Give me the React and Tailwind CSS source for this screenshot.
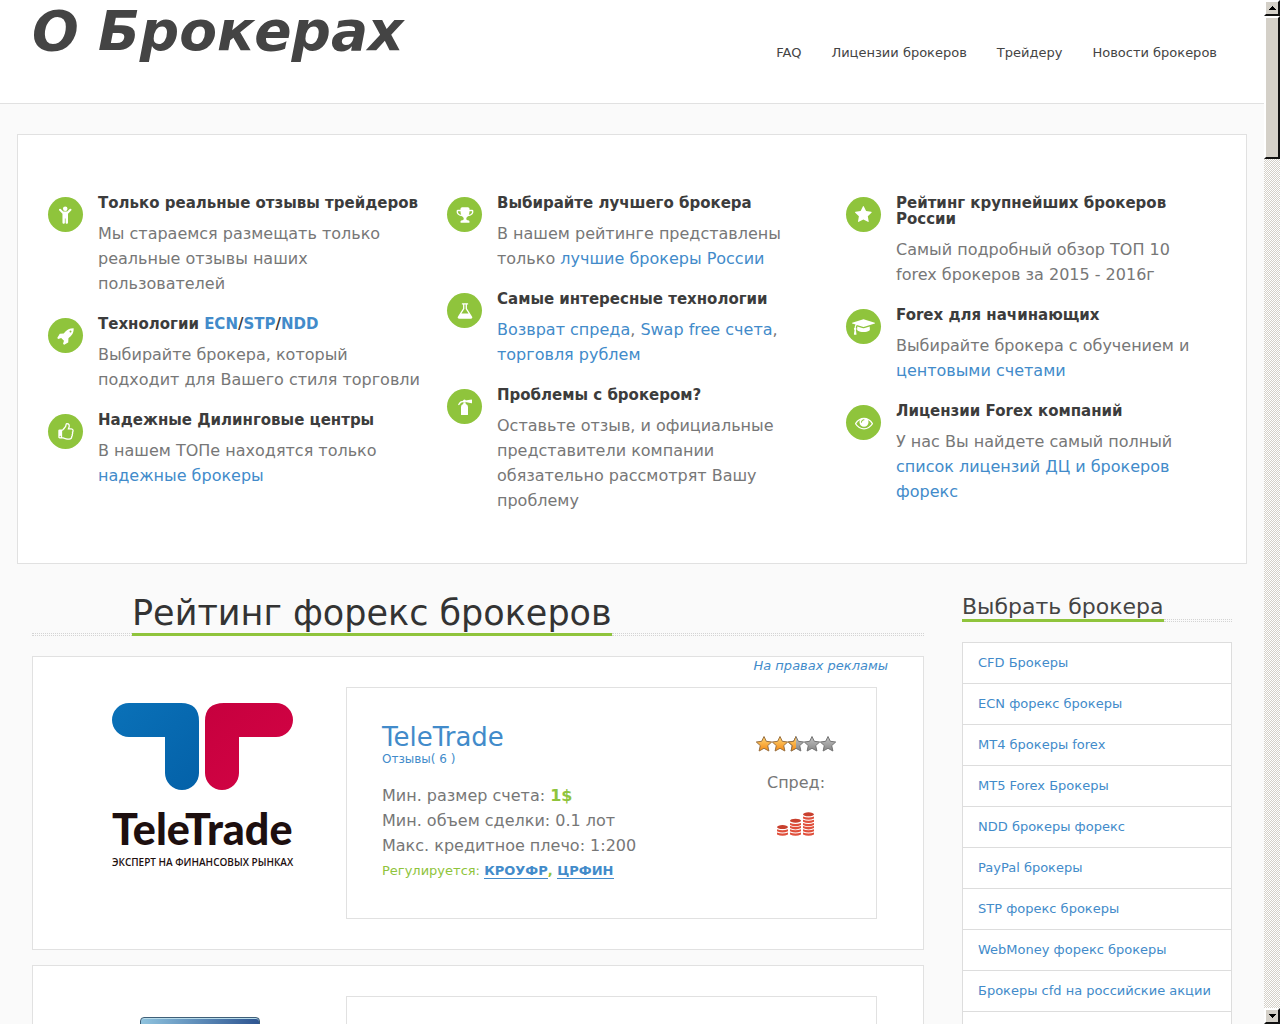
import React from 'react';

const checker = 'bg-[repeating-conic-gradient(#d4d0c8_0_25%,#ffffff_0_50%)] bg-[length:2px_2px]';
const dots = 'h-[3px] border-y border-dotted border-[#d4d4d4]';

const paths = {
  rocket: 'M1440 448q0-40-28-68t-68-28-68 28-28 68 28 68 68 28 68-28 28-68zm224-288q0 249-75.5 430.5t-253.5 360.5q-81 80-195 176l-20 379q-2 16-16 26l-384 224q-7 4-16 4-12 0-23-9l-64-64q-13-14-8-32l85-276-281-281-276 85q-3 1-9 1-14 0-23-9l-64-64q-17-19-5-39l224-384q10-14 26-16l379-20q96-114 176-195 188-187 358-258t431-71q14 0 24 9.5t10 22.5z',
  thumb: 'M384 1344q0-26-19-45t-45-19-45 19-19 45 19 45 45 19 45-19 19-45zm1152-576q0-51-39-89.5t-89-38.5h-352q0-58 48-159.5t48-160.5q0-98-32-145t-128-47q-26 26-38 85t-30.5 125.5-59.5 109.5q-22 23-77 91-4 5-23 30t-31.5 41-34.5 42.5-40 44-38.5 35.5-40 27-35.5 9h-32v640h32q13 0 31.5 3t33 6.5 38 11 35 11.5 35.5 12.5 29 10.5q211 73 342 73h121q192 0 192-167 0-26-5-56 30-16 47.5-52.5t17.5-73.5-18-69q53-50 53-119 0-25-10-55.5t-25-47.5q32-1 53.5-47t21.5-81zm128-1q0 89-49 163 9 33 9 69 0 77-38 144 3 21 3 43 0 101-60 178 1 139-85 219.5t-227 80.5h-129q-96 0-189.5-22.5t-216.5-65.5q-116-40-138-40h-288q-53 0-90.5-37.5t-37.5-90.5v-640q0-53 37.5-90.5t90.5-37.5h274q36-24 137-155 58-75 107-128 24-25 35.5-85.5t30.5-126.5 62-108q39-37 90-37 84 0 151 32.5t102 101.5 35 186q0 93-48 192h176q104 0 180 76t76 179z',
  trophy: 'M522 883q-74-162-74-371h-256v96q0 78 94.5 162t235.5 113zm1078-275v-96h-256q0 209-74 371 141-29 235.5-113t94.5-162zm128-128v128q0 71-41.5 143t-112 130-173 97.5-215.5 44.5q-42 54-95 95-38 34-52.5 72.5t-14.5 89.5q0 54 30.5 91t97.5 37q75 0 133.5 45.5t58.5 114.5v64q0 14-9 23t-23 9h-832q-14 0-23-9t-9-23v-64q0-69 58.5-114.5t133.5-45.5q67 0 97.5-37t30.5-91q0-51-14.5-89.5t-52.5-72.5q-53-41-95-95-113-5-215.5-44.5t-173-97.5-112-130-41.5-143v-128q0-40 28-68t68-28h288v-96q0-66 47-113t113-47h576q66 0 113 47t47 113v96h288q40 0 68 28t28 68z',
  flask: 'M1591 1448q56 89 21.5 152.5t-140.5 63.5h-1152q-106 0-140.5-63.5t21.5-152.5l503-793v-399h-64q-26 0-45-19t-19-45 19-45 45-19h512q26 0 45 19t19 45-19 45-45 19h-64v399zm-779-725l-272 429h712l-272-429-20-31v-436h-128v436z',
  star: 'M1664 615q0 22-26 48l-363 354 86 500q1 7 1 20 0 21-10.5 35.5t-30.5 14.5q-19 0-40-12l-449-236-449 236q-22 12-40 12-21 0-31.5-14.5t-10.5-35.5q0-6 2-20l86-500-364-354q-25-27-25-48 0-37 56-46l502-73 225-455q19-41 49-41t49 41l225 455 502 73q56 9 56 46z',
  eye: 'M1664 960q-152-236-381-353 61 104 61 225 0 185-131.5 316.5t-316.5 131.5-316.5-131.5-131.5-316.5q0-121 61-225-229 117-381 353 133 205 333.5 326.5t434.5 121.5 434.5-121.5 333.5-326.5zm-720-384q0-20-14-34t-34-14q-125 0-214.5 89.5t-89.5 214.5q0 20 14 34t34 14 34-14 14-34q0-86 61-147t147-61q20 0 34-14t14-34zm848 384q0 34-20 69-140 230-376.5 368.5t-499.5 138.5-499.5-139-376.5-368q-20-35-20-69t20-69q140-229 376.5-368t499.5-139 499.5 139 376.5 368q20 35 20 69z',
};

function Icon({ name }) {
  if (name === 'extinguisher') {
    return (
      <svg viewBox="0 0 18 18" className="h-[18px] w-[18px]" fill="currentColor">
        <path d="M5 9q0-2.300 2.300-3V4.400h2.400V6Q12 6.700 12 9v7.500q0 .500-.500.500h-6q-.500 0-.500-.500z" />
        <circle cx="8.500" cy="3" r="1.500" />
        <path d="M9.500 2.600l6-1.200q.500 0 .500.500v3q0 .500-.500.400l-6-1.200z" />
        <path d="M8.500 3.500Q4.500 3 2.800 6.500" fill="none" stroke="currentColor" strokeWidth="1.300" strokeLinecap="round" />
      </svg>
    );
  }
  if (name === 'child') {
    return (
      <svg viewBox="200 100 1152 1664" className="h-[18px]" fill="currentColor">
        <circle cx="776" cy="352" r="210" />
        <path d="M1324 516l-292 292v824q0 46-33 79t-79 33-79-33-33-79v-384h-64v384q0 46-33 79t-79 33-79-33-33-79v-824l-292-292q-28-28-28-68t28-68q29-28 68.500-28t67.500 28l228 228h368l228-228q28-28 68-28t68 28 28 68.500-28 67.500z" />
      </svg>
    );
  }
  if (name === 'cap') {
    return (
      <svg viewBox="0 0 2304 1792" className="h-[18px] w-[23px]" fill="currentColor">
        <path d="M1774 836l18 316q4 69-82 128t-235 93.500-323 34.500-323-34.500-235-93.500-82-128l18-316 574 181q22 7 48 7t48-7zm530-324q0 23-22 31l-1120 352q-4 1-10 1t-10-1l-652-206q-43 34-71 111.500t-34 178.500q63 36 63 109 0 69-58 107l58 433q2 14-8 25-9 11-24 11h-192q-15 0-24-11-10-11-8-25l58-433q-58-38-58-107 0-73 65-111 11-207 98-330l-333-104q-22-8-22-31t22-31l1120-352q4-1 10-1t10 1l1120 352q22 8 22 31z" />
      </svg>
    );
  }
  return (
    <svg viewBox="0 0 1792 1792" className="h-[18px] w-[18px]" fill="currentColor">
      <path d={paths[name]} />
    </svg>
  );
}

function A({ children }) {
  return <a href="#" className="text-[#428bca]">{children}</a>;
}

const features = [
  [
    { icon: 'child', title: 'Только реальные отзывы трейдеров', text: 'Мы стараемся размещать только реальные отзывы наших пользователей' },
    { icon: 'rocket', title: <>Технологии <A>ECN</A>/<A>STP</A>/<A>NDD</A></>, text: 'Выбирайте брокера, который подходит для Вашего стиля торговли' },
    { icon: 'thumb', title: 'Надежные Дилинговые центры', text: <>В нашем ТОПе находятся только <A>надежные брокеры</A></> },
  ],
  [
    { icon: 'trophy', title: 'Выбирайте лучшего брокера', text: <>В нашем рейтинге представлены только <A>лучшие брокеры России</A></> },
    { icon: 'flask', title: 'Самые интересные технологии', text: <><A>Возврат спреда</A>, <A>Swap free счета</A>, <A>торговля рублем</A></> },
    { icon: 'extinguisher', title: 'Проблемы с брокером?', text: 'Оставьте отзыв, и официальные представители компании обязательно рассмотрят Вашу проблему' },
  ],
  [
    { icon: 'star', title: 'Рейтинг крупнейших брокеров России', text: 'Самый подробный обзор ТОП 10 forex\u00a0брокеров за 2015 - 2016г' },
    { icon: 'cap', title: 'Forex для начинающих', text: <>Выбирайте брокера с обучением и <A>центовыми счетами</A></> },
    { icon: 'eye', title: 'Лицензии Forex компаний', text: <>У нас Вы найдете самый полный <A>список лицензий ДЦ и брокеров форекс</A></> },
  ],
];

const menu = ['FAQ', 'Лицензии брокеров', 'Трейдеру', 'Новости брокеров'];

const categories = [
  'CFD Брокеры',
  'ECN форекс брокеры',
  'MT4 брокеры forex',
  'MT5 Forex Брокеры',
  'NDD брокеры форекс',
  'PayPal брокеры',
  'STP форекс брокеры',
  'WebMoney форекс брокеры',
  'Брокеры cfd на российские акции',
];

function Header() {
  return (
    <header className="flex h-[104px] shrink-0 justify-between border-b border-[#e1e1e1] bg-white pl-8 pr-[47px]">
      <h1 className="text-[55px] font-bold italic leading-[62px] text-[#444444]">О Брокерах</h1>
      <nav className="flex gap-[30px] pt-[43px] text-[13px] leading-5 text-[#444444]">
        {menu.map((item) => (
          <a key={item} href="#">{item}</a>
        ))}
      </nav>
    </header>
  );
}

function Feature({ icon, title, text }) {
  return (
    <div className="mb-[19px] flex gap-[15px]">
      <div className="mt-[3px] flex h-[35px] w-[35px] shrink-0 items-center justify-center rounded-full bg-[#8fc43c] text-white">
        <Icon name={icon} />
      </div>
      <div>
        <h4 className="mb-[10px] pt-px text-[15px] font-bold leading-4 text-[#3c3c3c]">{title}</h4>
        <p className="leading-[25px]">{text}</p>
      </div>
    </div>
  );
}

function TeleTradeLogo() {
  return (
    <svg viewBox="0 0 184 174" className="h-[174px] w-[184px] overflow-visible" role="img" aria-label="TeleTrade">
      <defs>
        <linearGradient id="blue" x1="0" y1="0" x2="1" y2="1">
          <stop offset="0" stopColor="#0a71b8" />
          <stop offset="1" stopColor="#0461a8" />
        </linearGradient>
        <linearGradient id="red" x1="0" y1="0" x2="1" y2="1">
          <stop offset="0" stopColor="#c6003e" />
          <stop offset="1" stopColor="#d40445" />
        </linearGradient>
      </defs>
      <path fill="url(#blue)" d="M19 3H71Q89 3 89 21V73A17 17 0 0 1 55 73V37H19A17 17 0 0 1 19 3Z" />
      <path fill="url(#red)" d="M166 3H114Q95 3 95 21V73A17 17 0 0 0 129 73V37H166A17 17 0 0 0 166 3Z" />
      <text x="2" y="145" fontFamily="Lato, sans-serif" fontWeight="900" fontSize="43" fill="#1d0f0f">TeleTrade</text>
      <text x="2" y="166" fontFamily="'Open Sans', sans-serif" fontWeight="600" fontSize="10" fill="#1d0f0f">ЭКСПЕРТ НА ФИНАНСОВЫХ РЫНКАХ</text>
    </svg>
  );
}

function Stars() {
  const d = 'M8 .500l2.300 4.800 5.400.700-4 3.600 1.200 5.400-4.900-2.700-4.900 2.700 1.200-5.400L.3 6l5.400-.700z';
  return (
    <svg viewBox="0 0 80 16" className="h-4 w-20" role="img" aria-label="2.5">
      <defs>
        <linearGradient id="gold" x1="0" y1="0" x2="0" y2="1">
          <stop offset="0" stopColor="#ffd777" />
          <stop offset="1" stopColor="#f58a13" />
        </linearGradient>
        <linearGradient id="gray" x1="0" y1="0" x2="0" y2="1">
          <stop offset="0" stopColor="#c4c4c4" />
          <stop offset="1" stopColor="#858585" />
        </linearGradient>
        <clipPath id="half"><rect x="0" y="0" width="8" height="16" /></clipPath>
      </defs>
      {[0, 1, 2, 3, 4].map((i) => (
        <g key={i} transform={`translate(${i * 16} 0)`}>
          <path d={d} fill={i < 2 ? 'url(#gold)' : 'url(#gray)'} stroke={i < 2 ? '#9a7040' : '#747474'} />
          {i === 2 && <path d={d} fill="url(#gold)" stroke="#9a7040" clipPath="url(#half)" />}
        </g>
      ))}
    </svg>
  );
}

function Coins() {
  const stacks = [[1, 3], [14, 5], [27, 7]];
  return (
    <svg viewBox="0 0 40 26" className="h-[26px] w-10" fill="#e0503c">
      {stacks.map(([x, count]) => (
        <g key={x}>
          {Array.from({ length: count - 1 }, (_, i) => (
            <path key={i} d={`M${x} ${21.5 - i * 3.2}q5.500 2 11 0v2q-5.500 2.600-11 0z`} />
          ))}
          <ellipse cx={x + 5.5} cy={22.5 - (count - 1) * 3.2} rx="5.500" ry="2" fill="#c8402e" />
        </g>
      ))}
    </svg>
  );
}

function BrokerCard() {
  return (
    <article className="mb-[15px] border border-[#e1e1e1] bg-white pb-[30px]">
      <div className="h-[30px] pr-[35px] text-right text-[13px] italic leading-[18px]"><A>На правах рекламы</A></div>
      <div className="flex pr-[46px]">
        <div className="flex w-[313px] shrink-0 items-start justify-center pl-6 pt-[13px]">
          <TeleTradeLogo />
        </div>
        <div className="flex min-h-[232px] flex-1 justify-between border border-[#e1e1e1] pl-[35px] pr-10 pt-[35px]">
          <div>
            <h3 className="text-[26px] leading-[28px]"><A>TeleTrade</A></h3>
            <p className="mb-4 text-xs leading-4"><A>Отзывы( 6 )</A></p>
            <p className="leading-[25px]">Мин. размер счета: <b className="text-[#8fc43c]">1$</b></p>
            <p className="leading-[25px]">Мин. объем сделки: 0.1 лот</p>
            <p className="leading-[25px]">Макс. кредитное плечо: 1:200</p>
            <p className="text-[13px] leading-[26px] text-[#8fc43c]">
              Регулируется: <b><a href="#" className="border-b border-[#428bca] text-[#428bca]">КРОУФР</a>, <a href="#" className="border-b border-[#428bca] text-[#428bca]">ЦРФИН</a></b>
            </p>
          </div>
          <div className="flex flex-col items-center pt-[13px]">
            <Stars />
            <p className="mb-4 mt-[18px] leading-[25px]">Спред:</p>
            <Coins />
          </div>
        </div>
      </div>
    </article>
  );
}

function NextCard() {
  return (
    <article className="border border-[#e1e1e1] bg-white pt-[30px]">
      <div className="flex pr-[46px]">
        <div className="flex w-[313px] shrink-0 items-start justify-center pl-5 pt-[21px]">
          <div className="h-[120px] w-[120px] rounded-sm border border-[#3f5f78] bg-linear-to-r from-[#8fc3de] to-[#2f5591] shadow-[inset_0_1px_0_#b9dcea]" />
        </div>
        <div className="h-[232px] flex-1 border border-[#e1e1e1]" />
      </div>
    </article>
  );
}

function Sidebar() {
  return (
    <aside className="w-[270px] shrink-0">
      <div className="mb-5 flex items-end">
        <h2 className="border-b-[3px] border-[#8fc43c] pt-0.5 text-[22px] leading-6 text-[#444444]">Выбрать брокера</h2>
        <div className={`flex-1 ${dots}`} />
      </div>
      <ul className="border border-[#dddddd] bg-white pb-10 text-[13px]">
        {categories.map((item) => (
          <li key={item} className="border-b border-[#dddddd] px-[15px] py-[10px] leading-5"><A>{item}</A></li>
        ))}
      </ul>
    </aside>
  );
}

function Scrollbar() {
  return (
    <div className={`flex w-4 shrink-0 flex-col ${checker}`} aria-hidden="true">
      <div className="flex h-4 items-center justify-center border-2 border-b-[#111111] border-l-white border-r-[#111111] border-t-white bg-[#d4d0c8]">
        <svg viewBox="0 0 7 4" className="h-1 w-[7px]"><path d="M3 0h1v1h1v1h1v1h1v1H0V3h1V2h1V1h1z" /></svg>
      </div>
      <div className="h-[143px] border-2 border-b-[#111111] border-l-white border-r-[#111111] border-t-white bg-[#d4d0c8]" />
      <div className="mt-auto flex h-4 items-center justify-center border-2 border-b-[#111111] border-l-white border-r-[#111111] border-t-white bg-[#d4d0c8]">
        <svg viewBox="0 0 7 4" className="h-1 w-[7px]"><path d="M3 4h1V3h1V2h1V1h1V0H0v1h1v1h1v1h1z" /></svg>
      </div>
    </div>
  );
}

export default function App() {
  return (
    <div className="flex h-screen overflow-hidden bg-[#fafafa] font-['DejaVu_Sans',sans-serif] text-base text-[#777777]">
      <div className="flex min-w-0 flex-1 flex-col overflow-hidden">
        <Header />
        <section className="mx-[17px] mt-[30px] grid shrink-0 grid-cols-3 gap-x-6 border border-[#e1e1e1] bg-white pb-[31px] pl-[30px] pr-[25px] pt-[59px]">
          {features.map((column, i) => (
            <div key={i}>
              {column.map((item) => (
                <Feature key={item.icon} {...item} />
              ))}
            </div>
          ))}
        </section>
        <div className="flex justify-between gap-[38px] pl-8 pr-8 pt-[29px]">
          <main className="min-w-0 flex-1">
            <div className="mb-5 flex items-end">
              <div className={`w-[100px] ${dots}`} />
              <h2 className="border-b-[3px] border-[#8fc43c] text-[35px] leading-10 text-[#333333]">Рейтинг форекс брокеров</h2>
              <div className={`flex-1 ${dots}`} />
            </div>
            <BrokerCard />
            <NextCard />
          </main>
          <Sidebar />
        </div>
      </div>
      <Scrollbar />
    </div>
  );
}
